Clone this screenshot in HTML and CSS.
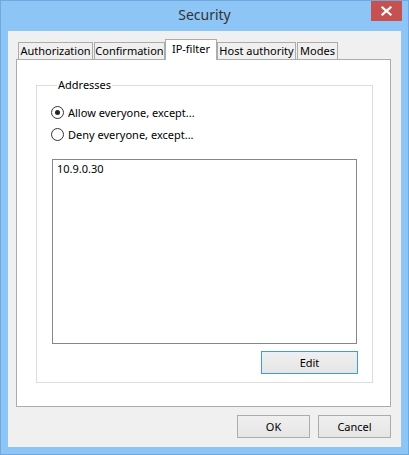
FILE: index.html
```html
<!DOCTYPE html>
<html>
<head>
<meta charset="utf-8">
<link rel="stylesheet" href="styles.css">
</head>
<body>
<div class="win">
  <div class="titlebar">
    <div></div>
    <div class="title">Security</div>
    <div class="close"><svg width="11" height="10" viewBox="0 0 11 10"><path d="M1.5 1.5 L9.5 8.5 M9.5 1.5 L1.5 8.5" stroke="#fff" stroke-width="2.2" stroke-linecap="square"/></svg></div>
  </div>
  <div class="client">
    <div class="tabs">
      <div class="tab t-auth">Authorization</div>
      <div class="tab t-conf">Confirmation</div>
      <div class="tab sel t-ip">IP-filter</div>
      <div class="tab t-host">Host authority</div>
      <div class="tab t-modes">Modes</div>
    </div>
    <div class="panel">
      <fieldset class="group">
        <legend>Addresses</legend>
        <div class="radio-row first"><span class="radio checked"></span><span>Allow everyone, except...</span></div>
        <div class="radio-row"><span class="radio"></span><span>Deny everyone, except...</span></div>
        <div class="listbox"><div class="item">10.9.0.30</div></div>
        <div class="edit-row"><div class="btn focused edit">Edit</div></div>
      </fieldset>
    </div>
    <div class="footer">
      <div class="btn">OK</div>
      <div class="btn">Cancel</div>
    </div>
  </div>
</div>
</body>
</html>
```

FILE: styles.css
```css
html, body {
  margin: 0;
  padding: 0;
}
body {
  font-family: "Noto Sans", "Open Sans", sans-serif;
  font-size: 11px;
  color: #000;
}
.win {
  width: 409px;
  height: 455px;
  box-sizing: border-box;
  border: 1px solid #6ea9e0;
  background: #8cc5f6;
  display: flex;
  flex-direction: column;
}
.titlebar {
  height: 30px;
  display: grid;
  grid-template-columns: 1fr auto 1fr;
  align-items: start;
}
.title {
  font-size: 14px;
  line-height: 28px;
  color: #333;
}
.close {
  justify-self: end;
  margin-right: 6px;
  width: 31px;
  height: 20px;
  background: #c75050;
  display: flex;
  align-items: center;
  justify-content: center;
}
.client {
  flex: 1;
  margin: 0 7px 7px 7px;
  background: #f0f0f0;
  padding: 8px 10px 0 8px;
  display: flex;
  flex-direction: column;
}
.tabs {
  display: flex;
  align-items: flex-end;
  height: 21px;
  margin-bottom: -1px;
  position: relative;
  z-index: 1;
}
.tab {
  box-sizing: border-box;
  height: 17px;
  margin-bottom: 1px;
  border: 1px solid #acacac;
  border-bottom: none;
  background: #f0f0f0;
  line-height: 16px;
  text-align: center;
  white-space: nowrap;
}
.tab.sel {
  height: 21px;
  margin-bottom: 0;
  background: #fff;
  line-height: 18px;
}
.t-auth { margin-left: 2px; width: 75px; }
.t-conf { margin-left: 1px; width: 71px; }
.t-ip { width: 52px; }
.t-host { width: 79px; }
.t-modes { width: 41px; margin-left: 1px; }
.panel {
  box-sizing: border-box;
  height: 348px;
  border: 1px solid #acacac;
  background: #fff;
  padding: 0 17px 0 19px;
}
.group {
  margin: 17px 0 0 0;
  padding: 0 14px 8px 14px;
  border: 1px solid #dcdcdc;
  min-width: 0;
  display: flex;
  flex-direction: column;
}
.group legend {
  margin-left: 6px;
  padding: 0 1px;
  line-height: 16px;
}
.radio-row {
  display: flex;
  align-items: center;
  height: 16px;
  margin-top: 6px;
  gap: 4px;
}
.radio-row.first {
  margin-top: 11px;
}
.radio {
  box-sizing: border-box;
  width: 13px;
  height: 13px;
  border-radius: 50%;
  border: 1px solid #333;
  background: #fff;
  display: flex;
  align-items: center;
  justify-content: center;
}
.radio.checked::after {
  content: "";
  width: 5px;
  height: 5px;
  border-radius: 50%;
  background: #222;
}
.listbox {
  box-sizing: border-box;
  margin: 17px 1px 0 1px;
  height: 185px;
  border: 1px solid #828790;
  background: #fff;
  padding: 1px 4px;
}
.item {
  line-height: 16px;
}
.edit-row {
  display: flex;
  justify-content: flex-end;
  margin-top: 7px;
}
.btn {
  box-sizing: border-box;
  width: 73px;
  height: 23px;
  border: 1px solid #acacac;
  background: linear-gradient(#f0f0f0, #e5e5e5);
  text-align: center;
  line-height: 21px;
}
.btn.edit {
  width: 97px;
}
.btn.focused {
  border-color: #3c9af0;
}
.footer {
  display: flex;
  justify-content: flex-end;
  gap: 8px;
  margin-top: 8px;
}
```
